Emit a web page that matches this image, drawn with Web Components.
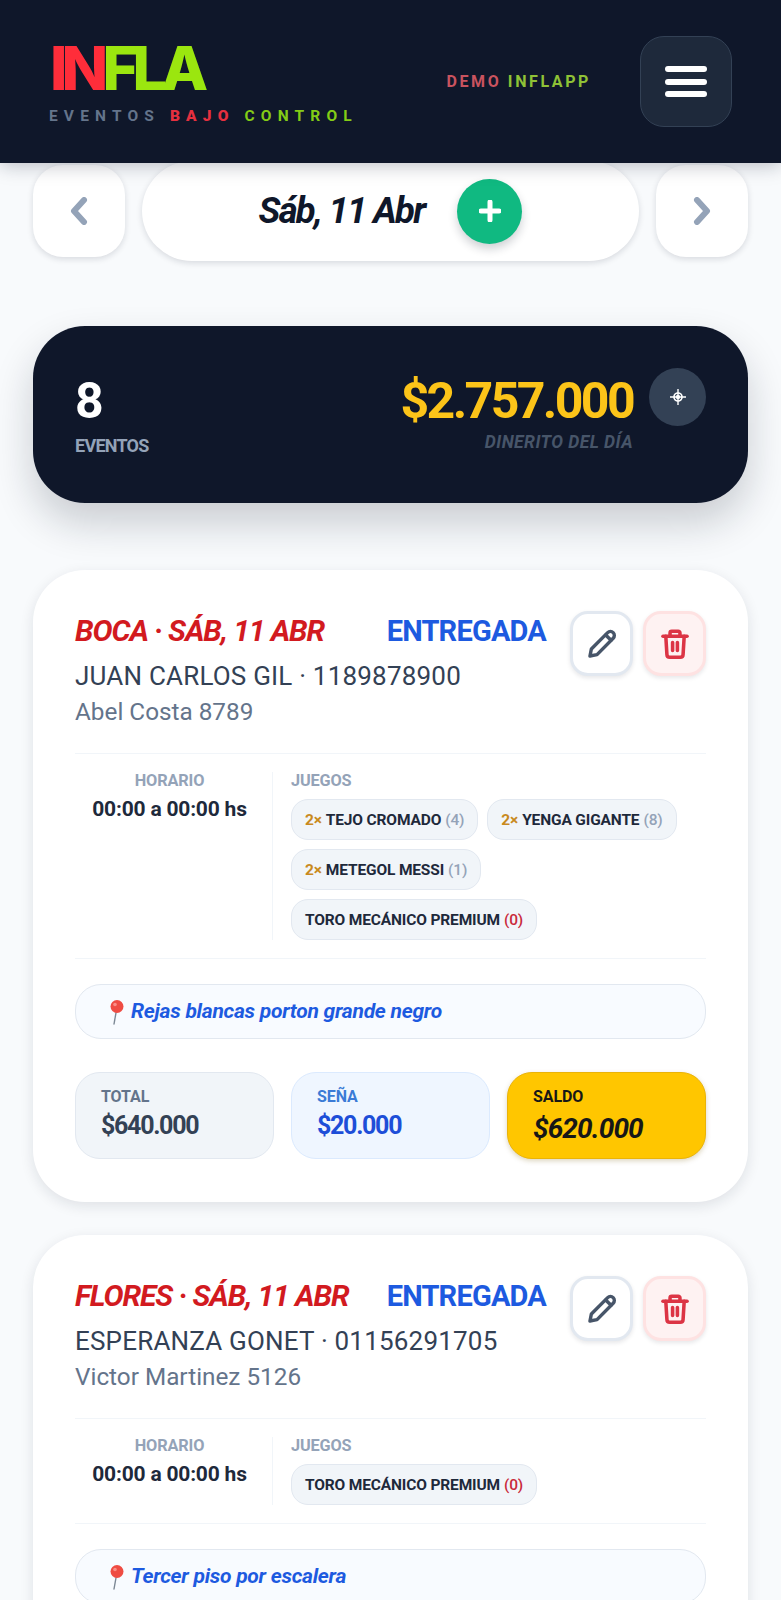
<!DOCTYPE html>
<html lang="es">
<head>
<meta charset="utf-8">
<title>INFLA</title>
<style>
  html, body { margin: 0; padding: 0; background: #f8fafc; }
  body { font-family: Roboto, "Liberation Sans", sans-serif; overflow: hidden; height: 1600px; }
  event-card { margin-bottom: 33px; }
</style>
</head>
<body>
<app-header></app-header>
<date-nav label="Sáb, 11 Abr"></date-nav>
<day-stats count="8" money="$2.757.000"></day-stats>

<event-card place="BOCA · SÁB, 11 ABR" status="ENTREGADA" client="JUAN CARLOS GIL · 1189878900" address="Abel Costa 8789" time="00:00 a 00:00 hs" note="Rejas blancas porton grande negro">
  <game-chip qty="2×" name="TEJO CROMADO" stock="4"></game-chip>
  <game-chip qty="2×" name="YENGA GIGANTE" stock="8"></game-chip>
  <game-chip qty="2×" name="METEGOL MESSI" stock="1"></game-chip>
  <game-chip name="TORO MECÁNICO PREMIUM" stock="0"></game-chip>
  <money-box slot="money" kind="total" label="TOTAL" value="$640.000"></money-box>
  <money-box slot="money" kind="sena" label="SEÑA" value="$20.000"></money-box>
  <money-box slot="money" kind="saldo" label="SALDO" value="$620.000"></money-box>
</event-card>

<event-card place="FLORES · SÁB, 11 ABR" status="ENTREGADA" client="ESPERANZA GONET · 01156291705" address="Victor Martinez 5126" time="00:00 a 00:00 hs" note="Tercer piso por escalera">
  <game-chip name="TORO MECÁNICO PREMIUM" stock="0"></game-chip>
</event-card>

<script>
class AppHeader extends HTMLElement {
  constructor() {
    super();
    this.attachShadow({ mode: 'open' });
    this.shadowRoot.innerHTML = /*html*/`
    <style>
      :host {
        display: flex; position: relative; z-index: 2; box-sizing: border-box;
        height: 163px; align-items: flex-start; justify-content: space-between;
        background: #0f172a; padding: 36px 49px 0 49px;
        box-shadow: 0 2px 18px rgba(15,23,42,.28);
      }
      .logo { font: 800 61px/44px Inter, Roboto, sans-serif; letter-spacing: -5.8px; margin: 10px 0 0 1px; }
      .red { color: #ff2d3a; } .green { color: #9be60f; }
      .tag { font: 700 15.5px/18px Roboto, sans-serif; letter-spacing: 6.15px; color: #64748b; margin-top: 17px; white-space: nowrap; }
      .tag b { color: #e5303f; } .tag i { color: #84cc16; font-style: normal; }
      .right { display: flex; align-items: center; gap: 49px; }
      .demo { font: 700 16px/18px Roboto, sans-serif; letter-spacing: 2.6px; color: #c9535f; margin-top: 1px; }
      .demo span { color: #8fc236; }
      .menu {
        box-sizing: border-box; width: 92px; height: 91px; border-radius: 24px;
        background: #1e293b; border: 1px solid #334155;
        display: flex; flex-direction: column; align-items: center; justify-content: center; gap: 6.5px;
      }
      .menu i { display: block; width: 42px; height: 6px; border-radius: 3px; background: #fff; }
    </style>
    <div>
      <div class="logo"><span class="red">IN</span><span class="green">FLA</span></div>
      <div class="tag">EVENTOS <b>BAJO</b> <i>CONTROL</i></div>
    </div>
    <div class="right">
      <div class="demo">DEMO <span>INFLAPP</span></div>
      <div class="menu"><i></i><i></i><i></i></div>
    </div>`;
  }
}

class DateNav extends HTMLElement {
  constructor() {
    super();
    this.attachShadow({ mode: 'open' });
    this.shadowRoot.innerHTML = /*html*/`
    <style>
      :host { display: flex; align-items: center; justify-content: space-between; padding: 0 33px; margin-top: -2px; height: 100px; }
      .arrow {
        width: 92px; height: 92px; border-radius: 30px; background: #fff;
        box-shadow: 0 2px 6px rgba(15,23,42,.14);
        display: flex; align-items: center; justify-content: center;
      }
      .pill {
        width: 497px; height: 100px; border-radius: 50px; background: #fff;
        box-shadow: 0 2px 6px rgba(15,23,42,.14);
        display: flex; align-items: center; justify-content: center; gap: 33px;
      }
      .date { font: italic 700 36.5px/44px Roboto, sans-serif; letter-spacing: -1.7px; color: #0f172a; white-space: nowrap; }
      .add {
        width: 65px; height: 65px; border-radius: 50%; background: #10b981;
        box-shadow: 0 5px 10px rgba(15,23,42,.2);
        display: flex; align-items: center; justify-content: center;
      }
      svg { display: block; }
    </style>
    <div class="arrow"><svg width="20" height="28" viewBox="0 0 20 28"><path d="M15 3L5 14l10 11" fill="none" stroke="#94a3b8" stroke-width="6" stroke-linecap="round" stroke-linejoin="round"/></svg></div>
    <div class="pill">
      <span class="date"></span>
      <div class="add"><svg width="22" height="22" viewBox="0 0 22 22"><path d="M11 2v18M2 11h18" stroke="#fff" stroke-width="5" stroke-linecap="round"/></svg></div>
    </div>
    <div class="arrow"><svg width="20" height="28" viewBox="0 0 20 28"><path d="M5 3l10 11L5 25" fill="none" stroke="#94a3b8" stroke-width="6" stroke-linecap="round" stroke-linejoin="round"/></svg></div>`;
    this.shadowRoot.querySelector('.date').textContent = this.getAttribute('label');
  }
}

class DayStats extends HTMLElement {
  constructor() {
    super();
    this.attachShadow({ mode: 'open' });
    this.shadowRoot.innerHTML = /*html*/`
    <style>
      :host {
        display: flex; box-sizing: border-box; justify-content: space-between; align-items: flex-start;
        height: 177px; margin: 65px 33px 67px; padding: 42px 42px 0;
        background: #0f172a; border-radius: 52px;
        box-shadow: 0 20px 40px rgba(15,23,42,.2);
      }
      .count { font: 700 50px/58px Roboto, sans-serif; color: #fff; margin-top: 4px; }
      .lab { font: 700 18px/22px Roboto, sans-serif; letter-spacing: -.75px; color: #94a3b8; margin-top: 5px; }
      .right { display: grid; grid-template-columns: auto 57px; column-gap: 16px; align-items: start; }
      .money { font: 700 50px/58px Roboto, sans-serif; letter-spacing: -2.6px; color: #fcc419; margin-top: 4px; }
      .day { grid-column: 1; text-align: right; font: italic 700 17.5px/22px Roboto, sans-serif; letter-spacing: .45px; color: #475569; margin-top: 1px; }
      .locate {
        grid-column: 2; grid-row: 1; width: 57px; height: 58px; border-radius: 50%; background: #334155;
        display: flex; align-items: center; justify-content: center;
      }
      svg { display: block; }
    </style>
    <div>
      <div class="count"></div>
      <div class="lab">EVENTOS</div>
    </div>
    <div class="right">
      <div class="money"></div>
      <div class="locate"><svg width="16" height="16" viewBox="0 0 16 16"><circle cx="8" cy="8" r="4" fill="none" stroke="#fff" stroke-width="1.7"/><path d="M8 0v16M0 8h16" stroke="#fff" stroke-width="1.4"/><circle cx="8" cy="8" r="2.2" fill="#fff"/></svg></div>
      <div class="day">DINERITO DEL DÍA</div>
    </div>`;
    this.shadowRoot.querySelector('.count').textContent = this.getAttribute('count');
    this.shadowRoot.querySelector('.money').textContent = this.getAttribute('money');
  }
}

class GameChip extends HTMLElement {
  constructor() {
    super();
    this.attachShadow({ mode: 'open' });
    this.shadowRoot.innerHTML = /*html*/`
    <style>
      :host {
        display: inline-flex; box-sizing: border-box; height: 41px; align-items: center; gap: 4px;
        padding: 0 13px; border-radius: 17px; background: #f1f5f9; border: 1px solid #e2e8f0;
        font: 700 15.5px/18px Roboto, sans-serif; letter-spacing: -.15px; color: #1e293b; white-space: nowrap;
      }
      .qty { color: #c98a1e; }
      .qty:empty { display: none; }
      .stock { color: #94a3b8; font-weight: 500; }
      .stock.zero { color: #c92a3a; }
    </style>
    <span class="qty"></span><span class="name"></span><span class="stock"></span>`;
    const s = this.getAttribute('stock');
    this.shadowRoot.querySelector('.qty').textContent = this.getAttribute('qty') || '';
    this.shadowRoot.querySelector('.name').textContent = this.getAttribute('name');
    const st = this.shadowRoot.querySelector('.stock');
    st.textContent = '(' + s + ')';
    if (s === '0') st.classList.add('zero');
  }
}

class MoneyBox extends HTMLElement {
  constructor() {
    super();
    this.attachShadow({ mode: 'open' });
    this.shadowRoot.innerHTML = /*html*/`
    <style>
      :host {
        display: block; box-sizing: border-box; height: 87px; padding: 15px 25px 0; border-radius: 25px;
        background: #f1f5f9; border: 1px solid #e2e8f0; color: #334155;
      }
      :host([kind="sena"]) { background: #eff6ff; border-color: #dbeafe; color: #1d4ed8; }
      :host([kind="saldo"]) { background: #ffc600; border-color: #eab308; color: #171717; box-shadow: 0 2px 5px rgba(120,90,0,.25); }
      .lab { font: 700 16px/18px Roboto, sans-serif; letter-spacing: -.1px; color: #64748b; }
      :host([kind="sena"]) .lab { color: #3b7bd6; }
      :host([kind="saldo"]) .lab { color: #171717; }
      .val { font: 700 25px/32px Roboto, sans-serif; letter-spacing: -1.3px; margin-top: 4px; }
      :host([kind="saldo"]) .val { font-style: italic; font-size: 28px; letter-spacing: -.9px; margin-top: 7px; }
    </style>
    <div class="lab"></div><div class="val"></div>`;
    this.shadowRoot.querySelector('.lab').textContent = this.getAttribute('label');
    this.shadowRoot.querySelector('.val').textContent = this.getAttribute('value');
  }
}

class EventCard extends HTMLElement {
  constructor() {
    super();
    this.attachShadow({ mode: 'open' });
    this.shadowRoot.innerHTML = /*html*/`
    <style>
      :host {
        display: block; box-sizing: border-box; margin: 0 33px; padding: 41px 42px 43px;
        background: #fff; border-radius: 52px;
        box-shadow: 0 4px 14px rgba(15,23,42,.11);
      }
      .top { display: flex; justify-content: space-between; height: 143px; box-sizing: border-box; border-bottom: 1px solid #f1f5f9; }
      .info { min-width: 0; flex: 1; }
      .line1 { display: flex; justify-content: space-between; padding-right: 24px; height: 36px; align-items: center; margin-top: 2px; }
      .place { font: italic 700 30px/36px Roboto, sans-serif; letter-spacing: -1.1px; color: #d21a1f; white-space: nowrap; }
      .status { font: 700 29px/36px Roboto, sans-serif; letter-spacing: -.8px; color: #1d5ae0; white-space: nowrap; }
      .client { font: 400 26px/34px Roboto, sans-serif; letter-spacing: .2px; color: #334155; margin-top: 10px; white-space: nowrap; }
      .address { font: 400 24.3px/30px Roboto, sans-serif; color: #64748b; margin-top: 4px; white-space: nowrap; }
      .acts { display: flex; gap: 10px; flex: none; }
      .act {
        box-sizing: border-box; width: 63px; height: 65px; border-radius: 18px; background: #fff;
        border: 3px solid #e2e8f0; box-shadow: 0 2px 4px rgba(15,23,42,.1);
        display: flex; align-items: center; justify-content: center;
      }
      .act.del { background: #fef2f2; border-color: #fee2e2; }
      .mid { display: flex; border-bottom: 1px solid #f1f5f9; padding: 18px 0 18px; }
      .hours { flex: none; width: 198px; box-sizing: border-box; border-right: 1px solid #f1f5f9; text-align: center; padding-right: 8px; margin-right: 18px; }
      .lab { font: 700 16.3px/18px Roboto, sans-serif; letter-spacing: -.15px; color: #94a3b8; }
      .time { font: 700 21px/26px Roboto, sans-serif; letter-spacing: -.2px; color: #1e293b; margin-top: 6px; }
      .chips { display: flex; flex-wrap: wrap; gap: 9px; margin-top: 9px; }
      .note {
        display: flex; align-items: center; gap: 5px; box-sizing: border-box; height: 55px; margin-top: 25px;
        padding-left: 30px; border-radius: 26px; background: #f8fbff; border: 1px solid #e2e8f0;
        font: italic 700 21px/24px Roboto, sans-serif; letter-spacing: -.25px; color: #1d5ae0;
      }
      .note-text { margin-top: -2px; }
      .money { display: grid; grid-template-columns: repeat(3, 1fr); gap: 17px; margin-top: 33px; }
      svg { display: block; }
    </style>
    <div class="top">
      <div class="info">
        <div class="line1"><span class="place"></span><span class="status"></span></div>
        <div class="client"></div>
        <div class="address"></div>
      </div>
      <div class="acts">
        <div class="act"><svg width="34" height="34" viewBox="0 0 24 24" fill="none" stroke="#475569" stroke-width="2.4" stroke-linejoin="round" stroke-linecap="round"><path d="M3.5 20.5l1-5L16 4a2.4 2.4 0 0 1 3.9 3.9L8.5 19.5z"/><path d="M14.6 5.6l3.8 3.8"/></svg></div>
        <div class="act del"><svg width="34" height="34" viewBox="0 0 24 24" fill="none" stroke="#dc3545" stroke-width="2.5" stroke-linejoin="round" stroke-linecap="round"><path d="M3.5 6.5h17"/><path d="M8.5 6.5V4.2a1.2 1.2 0 0 1 1.2-1.2h4.6a1.2 1.2 0 0 1 1.2 1.2v2.3"/><path d="M5.5 6.5l.8 13a2 2 0 0 0 2 1.9h7.4a2 2 0 0 0 2-1.9l.8-13"/><path d="M10.3 11v5.5M13.7 11v5.5"/></svg></div>
      </div>
    </div>
    <div class="mid">
      <div class="hours"><div class="lab">HORARIO</div><div class="time"></div></div>
      <div><div class="lab">JUEGOS</div><div class="chips"><slot></slot></div></div>
    </div>
    <div class="note">
      <svg width="20" height="26" viewBox="0 0 20 26"><path d="M10.5 11L8 25" stroke="#7b8794" stroke-width="1.4" stroke-linecap="round"/><circle cx="11" cy="7.5" r="6.5" fill="#ef4c43"/><circle cx="9" cy="5.5" r="1.8" fill="#f98f87"/></svg>
      <span class="note-text"></span>
    </div>
    <div class="money"><slot name="money"></slot></div>`;
    const q = (sel, attr) => { this.shadowRoot.querySelector(sel).textContent = this.getAttribute(attr); };
    q('.place', 'place');
    q('.status', 'status');
    q('.client', 'client');
    q('.address', 'address');
    q('.time', 'time');
    q('.note-text', 'note');
  }
}

customElements.define('app-header', AppHeader);
customElements.define('date-nav', DateNav);
customElements.define('day-stats', DayStats);
customElements.define('game-chip', GameChip);
customElements.define('money-box', MoneyBox);
customElements.define('event-card', EventCard);
</script>
</body>
</html>
